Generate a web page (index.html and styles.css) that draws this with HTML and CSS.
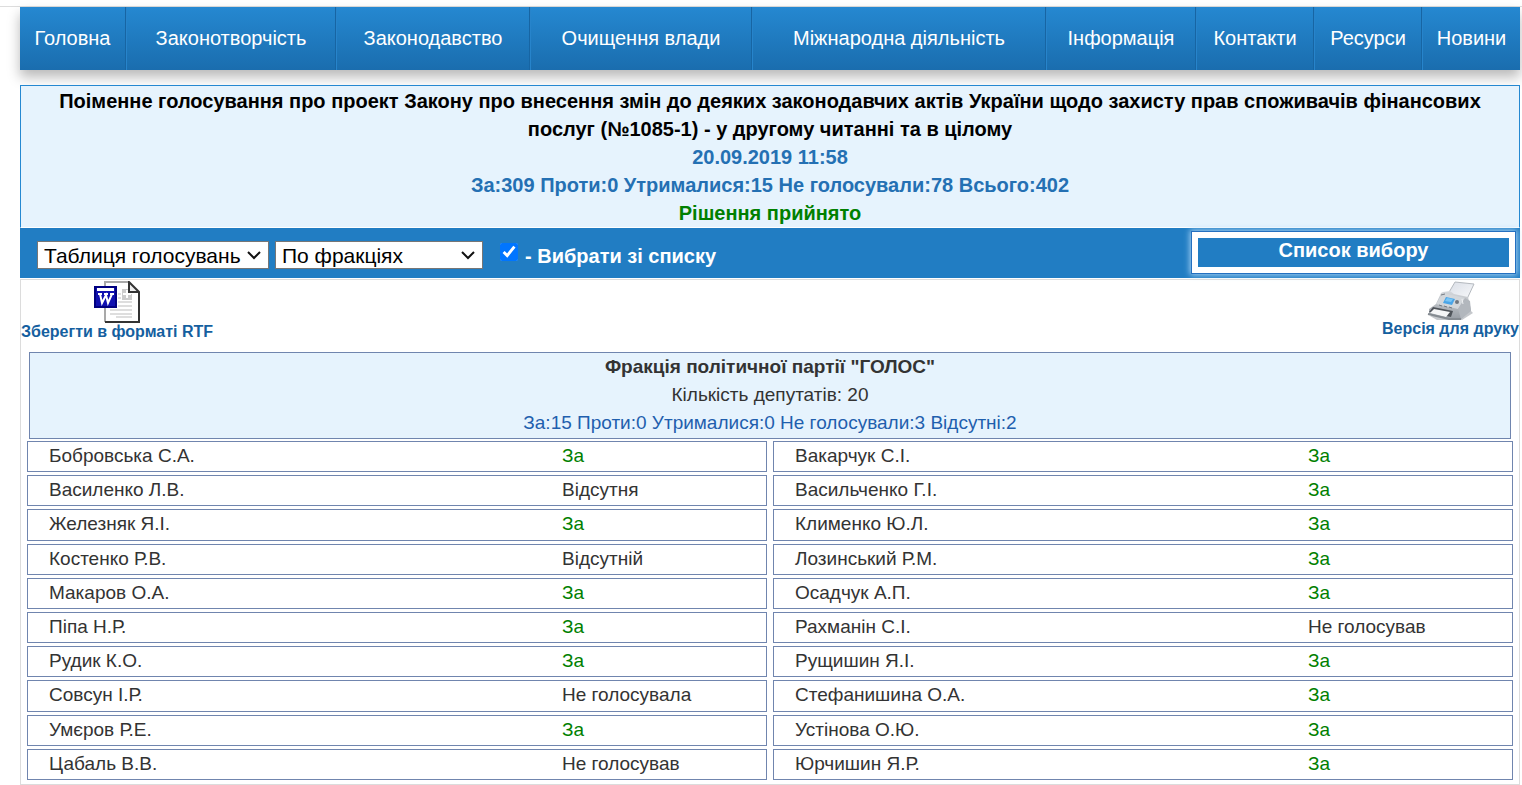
FILE: index.html
```html
<!DOCTYPE html>
<html lang="uk">
<head>
<meta charset="utf-8">
<meta name="viewport" content="width=device-width, initial-scale=1">
<title>Поіменне голосування</title>
<link rel="stylesheet" href="styles.css">
</head>
<body>
<div class="page">
  <nav class="menu">
    <a class="menu-item" href="#">Головна</a>
    <a class="menu-item" href="#">Законотворчість</a>
    <a class="menu-item" href="#">Законодавство</a>
    <a class="menu-item" href="#">Очищення влади</a>
    <a class="menu-item" href="#">Міжнародна діяльність</a>
    <a class="menu-item" href="#">Інформація</a>
    <a class="menu-item" href="#">Контакти</a>
    <a class="menu-item" href="#">Ресурси</a>
    <a class="menu-item" href="#">Новини</a>
  </nav>

  <header class="summary">
    <h1 class="summary-title">Поіменне голосування про проект Закону про внесення змін до деяких законодавчих актів України щодо захисту прав споживачів фінансових послуг (№1085-1) - у другому читанні та в цілому</h1>
    <p class="summary-info">20.09.2019 11:58</p>
    <p class="summary-info">За:309 Проти:0 Утрималися:15 Не голосували:78 Всього:402</p>
    <p class="summary-result">Рішення прийнято</p>
  </header>

  <form class="toolbar">
    <select class="picker picker-view" aria-label="Вигляд"><option>Таблиця голосувань</option></select>
    <select class="picker picker-group" aria-label="Групування"><option>По фракціях</option></select>
    <label class="check"><input class="check-box" type="checkbox" checked><span class="check-text">- Вибрати зі списку</span></label>
    <button class="choose" type="button">Список вибору</button>
  </form>

  <main class="panel">
    <div class="exports">
      <a class="export" href="#">
        <svg class="icon-doc" width="46" height="43" viewBox="0 0 46 43" aria-hidden="true">
          <path d="M11 1H35L45 11V41H11Z" fill="#fff"/>
          <path d="M11 41V1H35" fill="none" stroke="#a9a9a9" stroke-width="2"/>
          <path d="M11 41H45V11" fill="none" stroke="#333" stroke-width="2"/>
          <path d="M35 1L45 11H35Z" fill="#eee" stroke="#333" stroke-width="2"/>
          <path d="M28 8H34V13H38V19H28Z" fill="#ccc"/>
          <path d="M33 9V17M29 13H37" stroke="#fff" stroke-width="2"/>
          <path d="M24 13H27M24 17H27M24 21H38M24 25H38M16 29H38M16 33H38M22 36H38" stroke="#bdbdbd"/>
          <rect x="1" y="6" width="21" height="20" fill="#1010b0" stroke="#000080" stroke-width="2"/>
          <path d="M3 8.500H20" stroke="#fff" stroke-width="3"/>
          <path d="M4 13H8M10 13H14M16 13H20M6 13L8 22L12 14L14 22L18 13" fill="none" stroke="#fff" stroke-width="2"/>
        </svg>
        <span>Зберегти в форматі RTF</span>
      </a>
      <a class="export" href="#">
        <svg class="icon-fax" width="48" height="40" viewBox="0 0 48 40" aria-hidden="true">
          <defs>
            <linearGradient id="paper" x1="0" y1="0" x2="1" y2="1"><stop offset="0" stop-color="#d9dee6"/><stop offset="1" stop-color="#f8f9fb"/></linearGradient>
            <linearGradient id="shell" x1="0" y1="0" x2="0" y2="1"><stop offset="0" stop-color="#d5d8dc"/><stop offset="1" stop-color="#969ca3"/></linearGradient>
          </defs>
          <path d="M3 35L10 39H35L46 32L42 28Z" fill="#c5c8cc"/>
          <path d="M28 1L47 3L40 18L21 13Z" fill="url(#paper)" stroke="#b4b9bf"/>
          <path d="M16 11L23 10L27 13L41 16L44 29L34 38L28 39L2 33V28L9 23L14 12Z" fill="url(#shell)"/>
          <path d="M16 12L38 17L31 28L9 23Z" fill="#d3d7db"/>
          <path d="M38 17L43 20L44 30L34 38L31 28Z" fill="#b2b7bd"/>
          <path d="M19 16L28 18L25 24L16 22Z" fill="#4aa5e8"/>
          <path d="M20 17L26 18L24 21L18 20Z" fill="#79c5f5"/>
          <path d="M12 24L15 25M17 25L20 26M22 26L25 27M14 14L18 13" stroke="#747b83"/>
          <circle cx="30" cy="21" r="2" fill="#707780"/>
          <path d="M35 18L36 23" stroke="#eef0f2"/>
          <path d="M6 26L26 30L24 36L2 31Z" fill="#50555b"/>
          <path d="M7 28L23 31L19 36L3 32Z" fill="#f5f6f7"/>
          <path d="M1 33L22 38L34 38" fill="none" stroke="#858b91" stroke-width="2"/>
        </svg>
        <span>Версія для друку</span>
      </a>
    </div>

    <section class="faction">
      <div class="faction-head">
        <h2 class="faction-name">Фракція політичної партії "ГОЛОС"</h2>
        <p class="faction-count">Кількість депутатів: 20</p>
        <p class="faction-votes">За:15 Проти:0 Утрималися:0 Не голосували:3 Відсутні:2</p>
      </div>
      <ul class="deputies">
        <li class="deputy"><span>Бобровська С.А.</span><span class="yes">За</span></li>
        <li class="deputy"><span>Вакарчук С.І.</span><span class="yes">За</span></li>
        <li class="deputy"><span>Василенко Л.В.</span><span>Відсутня</span></li>
        <li class="deputy"><span>Васильченко Г.І.</span><span class="yes">За</span></li>
        <li class="deputy"><span>Железняк Я.І.</span><span class="yes">За</span></li>
        <li class="deputy"><span>Клименко Ю.Л.</span><span class="yes">За</span></li>
        <li class="deputy"><span>Костенко Р.В.</span><span>Відсутній</span></li>
        <li class="deputy"><span>Лозинський Р.М.</span><span class="yes">За</span></li>
        <li class="deputy"><span>Макаров О.А.</span><span class="yes">За</span></li>
        <li class="deputy"><span>Осадчук А.П.</span><span class="yes">За</span></li>
        <li class="deputy"><span>Піпа Н.Р.</span><span class="yes">За</span></li>
        <li class="deputy"><span>Рахманін С.І.</span><span>Не голосував</span></li>
        <li class="deputy"><span>Рудик К.О.</span><span class="yes">За</span></li>
        <li class="deputy"><span>Рущишин Я.І.</span><span class="yes">За</span></li>
        <li class="deputy"><span>Совсун І.Р.</span><span>Не голосувала</span></li>
        <li class="deputy"><span>Стефанишина О.А.</span><span class="yes">За</span></li>
        <li class="deputy"><span>Умєров Р.Е.</span><span class="yes">За</span></li>
        <li class="deputy"><span>Устінова О.Ю.</span><span class="yes">За</span></li>
        <li class="deputy"><span>Цабаль В.В.</span><span>Не голосував</span></li>
        <li class="deputy"><span>Юрчишин Я.Р.</span><span class="yes">За</span></li>
      </ul>
    </section>
  </main>
</div>
</body>
</html>
```

FILE: styles.css
```css
* { box-sizing: border-box; }

body {
  margin: 0;
  padding-top: 6px;
  background: #fff;
  color: #333;
  font-family: "Liberation Sans", Arial, sans-serif;
  font-size: 19px;
}

h1, h2, p, ul { margin: 0; padding: 0; }
a { text-decoration: none; }

.page {
  display: flex;
  flex-direction: column;
  min-height: calc(100vh - 6px);
  padding: 0 2px 0 20px;
  border-top: 1px solid #ddd;
}

.menu {
  display: grid;
  grid-template-columns: 106fr 210fr 194fr 222fr 294fr 150fr 118fr 108fr 98fr;
  margin-bottom: 15px;
  background: linear-gradient(#2588d1, #1a6dae);
  box-shadow: 0 7px 12px rgba(0, 0, 0, 0.28);
}

.menu-item {
  border-left: 1px solid #2784cb;
  border-right: 1px solid #1765a3;
  color: #fff;
  font-size: 20px;
  line-height: 63px;
  text-align: center;
  white-space: nowrap;
}
.menu-item:first-child { border-left: 0; }
.menu-item:last-child { border-right: 0; }

.summary {
  padding: 1px 20px 0;
  border: 1px solid #2588d1;
  border-bottom-color: #fff;
  background: #e6f3fd;
  font-size: 20px;
  font-weight: bold;
  line-height: 28px;
  text-align: center;
}
.summary-title { color: #000; font-size: 20px; }
.summary-info { color: #2470b3; }
.summary-result { color: #008000; }

.toolbar {
  display: flex;
  align-items: center;
  height: 50px;
  padding: 0 4px 0 17px;
  background: #217dc3;
  color: #fff;
}

.picker {
  height: 28px;
  margin: 4px 6px 0 0;
  padding: 0 24px 0 6px;
  border: 1px solid #767676;
  border-radius: 0;
  appearance: none;
  background: #fff url("data:image/svg+xml,%3Csvg xmlns='http://www.w3.org/2000/svg' width='14' height='9'%3E%3Cpath d='M1 1L7 7L13 1' fill='none' stroke='%23111' stroke-width='2'/%3E%3C/svg%3E") no-repeat right 7px center;
  color: #000;
  font-family: inherit;
  font-size: 21px;
}
.picker-view { width: 232px; }
.picker-group { width: 208px; }

.check {
  display: flex;
  align-items: center;
  margin-left: 11px;
  font-size: 20px;
  font-weight: bold;
}
.check-box {
  width: 18px;
  height: 18px;
  margin: 0 7px 3px 0;
  accent-color: #0075ff;
}
.check-text { padding-top: 6px; }

.choose {
  width: 325px;
  height: 43px;
  margin-left: auto;
  margin-bottom: 1px;
  padding: 0 0 5px;
  border: 1px solid #2470c0;
  outline: 0;
  background: #217dc3;
  box-shadow: inset 0 0 0 6px #fff, 0 0 6px 1px #a9d3f5;
  color: #fff;
  font-family: inherit;
  font-size: 20px;
  font-weight: bold;
}

.panel {
  display: flex;
  flex: 1;
  flex-direction: column;
  margin-top: 1px;
  border: 1px solid #dcdcdc;
}

.exports {
  display: flex;
  justify-content: space-between;
  align-items: flex-start;
  min-height: 72px;
  padding-top: 1px;
}
.export {
  display: flex;
  flex-direction: column;
  align-items: center;
  color: #155f9f;
  font-size: 16px;
  font-weight: bold;
  line-height: 16px;
}

.faction {
  display: flex;
  flex: 1;
  flex-direction: column;
  padding: 0 6px 4px;
}
.faction-head {
  margin: 0 2px 2px;
  padding-bottom: 1px;
  border: 1px solid #7085ae;
  background: #e6f3fd;
  line-height: 28px;
  text-align: center;
}
.faction-name { font-size: 19px; }
.faction-votes { color: #1f5fae; }

.deputies {
  display: grid;
  flex: 1;
  grid-template-columns: 1fr 1fr;
  grid-auto-rows: 1fr;
  gap: 3px 6px;
  list-style: none;
}
.deputy {
  display: grid;
  grid-template-columns: 513fr 204fr;
  align-items: center;
  padding: 0 0 1px 21px;
  border: 1px solid #7085ae;
  line-height: 28px;
}
.yes { color: #008000; }
```
